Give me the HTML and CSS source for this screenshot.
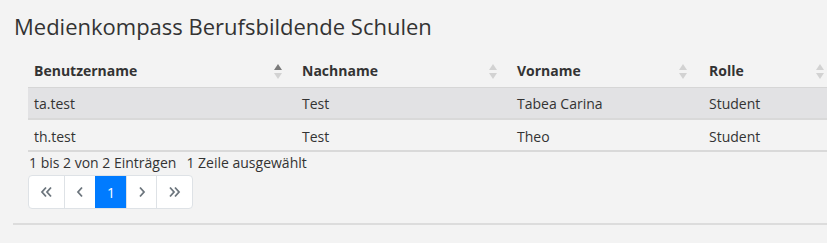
FILE: index.html
```html
<!DOCTYPE html>
<html lang="de">
<head>
<meta charset="utf-8">
<title>Medienkompass</title>
<link rel="stylesheet" href="styles.css">
</head>
<body>
<div class="page">
  <h1 class="title">Medienkompass Berufsbildende Schulen</h1>
  <div class="wrap">
    <table class="grid">
      <thead>
        <tr>
          <th class="c1"><span>Benutzername</span><i class="sort asc"></i></th>
          <th class="c2"><span>Nachname</span><i class="sort"></i></th>
          <th class="c3"><span>Vorname</span><i class="sort"></i></th>
          <th class="c4"><span>Rolle</span><i class="sort"></i></th>
        </tr>
      </thead>
      <tbody>
        <tr class="selected">
          <td>ta.test</td><td>Test</td><td>Tabea Carina</td><td>Student</td>
        </tr>
        <tr>
          <td>th.test</td><td>Test</td><td>Theo</td><td>Student</td>
        </tr>
      </tbody>
    </table>
    <div class="info">1 bis 2 von 2 Einträgen<span class="sel">1 Zeile ausgewählt</span></div>
    <ul class="pager">
      <li class="pg first"><svg width="13" height="12" viewBox="0 0 13 12"><path d="M6 1.5 L2 6 L6 10.5 M11 1.5 L7 6 L11 10.5" fill="none" stroke="#6c757d" stroke-width="1.8"/></svg></li>
      <li class="pg"><svg width="8" height="12" viewBox="0 0 8 12"><path d="M6 1.5 L2 6 L6 10.5" fill="none" stroke="#6c757d" stroke-width="1.8"/></svg></li>
      <li class="pg active">1</li>
      <li class="pg"><svg width="8" height="12" viewBox="0 0 8 12"><path d="M2 1.5 L6 6 L2 10.5" fill="none" stroke="#6c757d" stroke-width="1.8"/></svg></li>
      <li class="pg last"><svg width="13" height="12" viewBox="0 0 13 12"><path d="M2 1.5 L6 6 L2 10.5 M7 1.5 L11 6 L7 10.5" fill="none" stroke="#6c757d" stroke-width="1.8"/></svg></li>
    </ul>
  </div>
  <hr class="rule">
</div>
</body>
</html>
```
FILE: styles.css
```css
html, body {
  margin: 0;
  padding: 0;
  background: #f3f3f3;
  overflow: hidden;
}
body {
  font-family: "Open Sans", "Noto Sans", sans-serif;
  color: #333;
  font-size: 14px;
}
.page {
  padding: 0 0 0 13px;
}
.title {
  margin: 0;
  padding: 10px 0 0 1px;
  font-weight: 400;
  font-size: 22px;
  line-height: 32px;
  color: #333;
}
.wrap {
  padding: 13px 0 0 15px;
}
.grid {
  border-collapse: collapse;
  width: 802px;
  table-layout: fixed;
}
.grid th, .grid td {
  box-sizing: border-box;
  text-align: left;
  padding: 0 6px;
  height: 32px;
  white-space: nowrap;
}
.grid th {
  font-weight: 700;
  position: relative;
  border-bottom: 1px solid #d6d6d6;
}
.grid td {
  border-bottom: 2px solid #d9d9d9;
  padding-top: 2px;
}
.c1 { width: 260px; }
.c2 { width: 215px; }
.c3 { width: 192px; }
.c4 { width: 135px; }
.grid tr > :nth-child(n+2) { padding-left: 14px; }
.selected td { background: #e2e2e4; }
.sort {
  position: absolute;
  right: 6px;
  top: 9px;
  width: 8px;
  height: 15px;
}
.c3 .sort { right: 8px; }
.sort::before, .sort::after {
  content: "";
  position: absolute;
  left: 0;
  border-left: 4px solid transparent;
  border-right: 4px solid transparent;
}
.sort::before {
  top: 0;
  border-bottom: 6px solid #d2d2d2;
}
.sort::after {
  bottom: 0;
  border-top: 6px solid #d2d2d2;
}
.sort.asc::before { border-bottom-color: #7a7a7a; }
.info {
  padding: 1px 0 0 1px;
  line-height: 19px;
  color: #333;
}
.sel { margin-left: 10px; }
.pager {
  list-style: none;
  margin: 3px 0 0;
  padding: 0;
  display: inline-flex;
  border: 1px solid #dee2e6;
  border-radius: 4px;
  background: #fff;
}
.pg {
  width: 29px;
  height: 32px;
  display: flex;
  align-items: center;
  justify-content: center;
  border-left: 1px solid #dee2e6;
  color: #6c757d;
}
.pg:first-child { border-left: none; width: 35px; border-radius: 4px 0 0 4px; }
.pg:nth-child(2) { width: 30px; }
.pg.last { width: 35px; }
.pg.active {
  background: #007bff;
  color: #fff;
  border-left-color: #007bff;
  width: 30px;
}
.rule {
  margin: 14px 0 0;
  border: 0;
  border-top: 2px solid #dcdcdc;
}
```
